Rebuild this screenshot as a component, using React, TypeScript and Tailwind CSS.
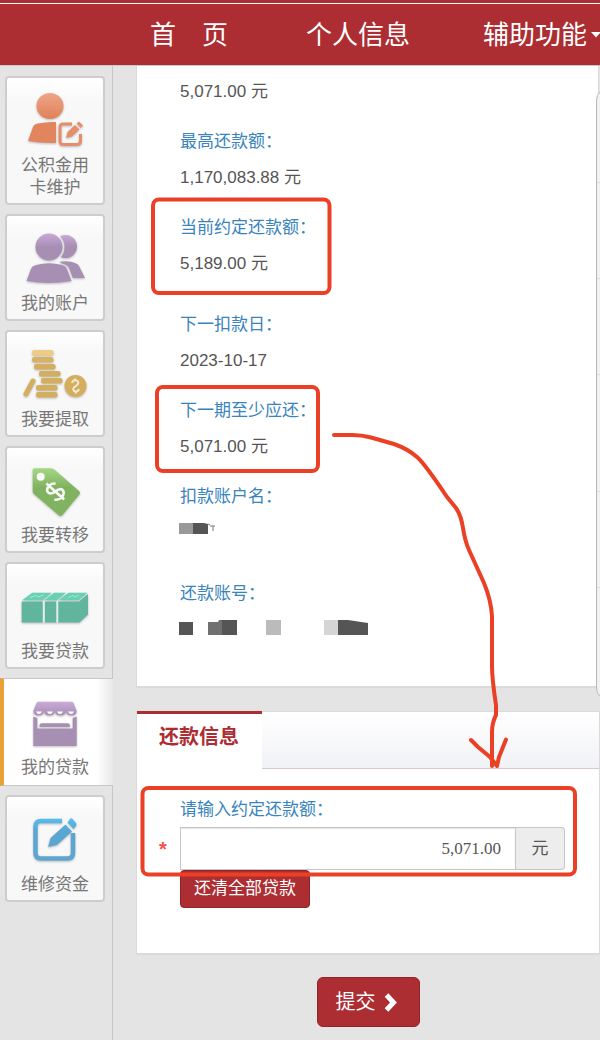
import React, { useState } from "react"
import clsx from "clsx"

const UserEditIcon = () => (
  <>
    <defs>
      <linearGradient id="orange" x1="0" y1="0" x2="0" y2="1">
        <stop offset="0" stopColor="#eda587" />
        <stop offset="1" stopColor="#e08159" />
      </linearGradient>
    </defs>
    <ellipse cx="31" cy="20" rx="13.5" ry="13" fill="url(#orange)" />
    <path d="M9 55 L14 41 Q15 38 19 37.5 Q28 35.5 37 36 V57 Q22 57.5 9 55Z" fill="#e2855f" />
    <path
      d="M53 38 H44 Q41 38 41 41 V55 Q41 58.5 44 58.5 H58 Q61.5 58.5 61.5 55 V48"
      fill="none"
      stroke="#e58e6b"
      strokeWidth="3"
    />
    <path d="M47 52 L48.5 46 L56 39 L60.5 43.5 L53 50.5Z M57.5 37.5 L60 35.5 L64 39.5 L62 42Z" fill="#e58e6b" />
  </>
)

const UsersIcon = () => (
  <>
    <defs>
      <linearGradient id="violet" x1="0" y1="0" x2="0" y2="1">
        <stop offset="0" stopColor="#c9a8d8" />
        <stop offset="0.5" stopColor="#a78fb4" />
      </linearGradient>
      <mask id="behind">
        <rect width="72" height="62" fill="#fff" />
        <circle cx="30" cy="23" r="15.5" fill="#000" />
        <path d="M38 36 L43 39.5 Q49 41 50 44 L55 57 H38Z" fill="#000" />
      </mask>
    </defs>
    <g mask="url(#behind)">
      <circle cx="46.5" cy="22.5" r="11.5" fill="url(#violet)" />
      <path d="M38 38 Q50 36 56 39 Q59 40 60 42 L66 54 H40Z" fill="#a78fb4" />
    </g>
    <circle cx="30" cy="23" r="13.5" fill="url(#violet)" />
    <path d="M7.5 57 L12 45 Q13 42 17 41 Q30 37.5 43 41 Q47 42 48 45 L52.5 57 Q30 61 7.5 57Z" fill="#a78fb4" />
  </>
)

const coins = [
  { x: 13, y: 10, fill: "#efcb84" },
  { x: 13, y: 17, fill: "#d6b262" },
  { x: 15, y: 24, fill: "#d2ae5e" },
  { x: 20, y: 31, fill: "#d2ae5e" },
  { x: 22, y: 38, fill: "#d2ae5e" },
  { x: 17, y: 45, fill: "#d2ae5e" },
  { x: 17, y: 52, fill: "#d2ae5e" },
]

const CoinsIcon = () => (
  <>
    {coins.map(coin => (
      <rect key={coin.y} x={coin.x} y={coin.y} width="21.5" height="5.4" rx="2.2" fill={coin.fill} />
    ))}
    <path d="M14 41 L7 54" stroke="#d2ae5e" strokeWidth="5" strokeLinecap="round" />
    <circle cx="56.5" cy="46" r="11" fill="#d2ae5e" />
    <path
      d="M53 43 Q54 39.5 57.5 40.5 Q61 42 58 45 L55 47.5 Q53 50 56 51.5 Q59 52 60 49 M56 38.5 V40.5 M57 51.5 V53.5"
      fill="none"
      stroke="#f3e9d2"
      strokeWidth="2"
    />
  </>
)

const TagIcon = () => (
  <>
    <defs>
      <linearGradient id="green" x1="0" y1="0" x2="0" y2="1">
        <stop offset="0" stopColor="#a5d886" />
        <stop offset="0.4" stopColor="#80b25f" />
      </linearGradient>
    </defs>
    <path
      d="M15.5 12.3 H32 Q34 12.3 36 14 L60 35 Q62 37 60 39 L43.5 59 Q41.7 61 39.5 59 L15 38 Q13.7 37 13.7 35 V14 Q13.7 12.3 15.5 12.3Z"
      fill="url(#green)"
    />
    <circle cx="21.7" cy="20.7" r="4" fill="#fafafa" />
    <g transform="translate(36.3 35.5) rotate(-48)">
      <path
        d="M6 -5 Q4 -8.5 0 -8.5 Q-6 -8 -5.5 -4 Q-5 -1 0 0 Q6 1 6 4.5 Q5.5 8.5 0 8.5 Q-5 8.5 -6.5 4.5 M0 -12 V12"
        fill="none"
        stroke="#f8f8f8"
        strokeWidth="2.6"
      />
    </g>
  </>
)

const CashIcon = () => (
  <>
    <path
      d="M3 28.2 L13.3 20.7 H32.7 L23.7 28.2Z M25.5 28.2 L35 20.7 H47 L37.7 28.2Z M39.5 28.2 L49.5 20.7 H68.5 L59.7 28.2Z"
      fill="#67d2b2"
    />
    <path
      d="M2.7 29.5 H23.7 V50.5 H2.7Z M26 29.5 H37.3 V50.5 H26Z M39.2 29.5 H60 L69 22 V42.5 L60.5 50.5 H39.2Z"
      fill="#60b59c"
    />
    <path d="M11 25.5 L17 23.5 L19 25 L25 23 M49 25.5 L54 23.5 L56 25 L60 23" fill="none" stroke="#a9e3d2" />
    <path d="M38.3 29 V50.5 M24.8 29 V50.5" stroke="#dcefe9" strokeWidth="1.8" />
  </>
)

const StallIcon = () => (
  <>
    <defs>
      <linearGradient id="roof" x1="0" y1="0" x2="0" y2="1">
        <stop offset="0" stopColor="#caa9d8" />
        <stop offset="1" stopColor="#a78fb4" />
      </linearGradient>
    </defs>
    <path
      d="M20 13.7 H52 Q54 13.7 54.5 15 L57.7 23 Q57.5 27.5 52.5 27.5 Q48 27.5 47 24 Q46 27.5 41.5 27.5 Q37 27.5 36 24 Q35 27.5 30.5 27.5 Q26 27.5 25 24 Q24 27.5 19.5 27.5 Q14.5 27.5 14.3 23 L17.5 15 Q18 13.7 20 13.7Z"
      fill="url(#roof)"
    />
    <path
      d="M17 23.5 H23 Q22 26 20 26 Q18 26 17 23.5Z M28 23.5 H34 Q33 26 31 26 Q29 26 28 23.5Z M38 23.5 H44 Q43 26 41 26 Q39 26 38 23.5Z M49 23.5 H55 Q54 26 52 26 Q50 26 49 23.5Z"
      fill="#fff"
    />
    <path d="M14.3 28.5 L18.3 30 V40.5 H53.7 V30 L57.7 28.5 V58 H14.3Z" fill="#a78fb4" />
    <path d="M20.5 39 V37.5 Q20.5 35.3 23 35.3 H48.5 Q51 35.3 51 37.5 V39Z" fill="#a78fb4" />
  </>
)

const ComposeIcon = () => (
  <>
    <defs>
      <linearGradient id="blue" gradientUnits="userSpaceOnUse" x1="0" y1="12" x2="0" y2="57">
        <stop offset="0" stopColor="#54c1f2" />
        <stop offset="0.3" stopColor="#5aa6d2" />
        <stop offset="1" stopColor="#5ea5cf" />
      </linearGradient>
    </defs>
    <path
      d="M43 16 H22 Q16.500 16 16.500 21.500 V48 Q16.500 53.500 22 53.500 H48.500 Q54 53.500 54 48 V28"
      fill="none"
      stroke="url(#blue)"
      strokeWidth="4.5"
    />
    <path
      d="M29 42 L31.5 33 L46.5 19.5 L53 26.5 L38 40Z M48.5 17.5 L51 14 Q52 12.5 53.5 14 L57 18 Q58 19.5 57 21 L54.5 24Z"
      fill="url(#blue)"
    />
  </>
)

const menu = [
  { label: "公积金用卡维护", Icon: UserEditIcon },
  { label: "我的账户", Icon: UsersIcon },
  { label: "我要提取", Icon: CoinsIcon },
  { label: "我要转移", Icon: TagIcon },
  { label: "我要贷款", Icon: CashIcon },
  { label: "我的贷款", Icon: StallIcon, active: true },
  { label: "维修资金", Icon: ComposeIcon },
]

const NameMask = () => (
  <svg width="40" height="36" className="-ml-0.5" aria-hidden="true">
    <rect x="1" y="8" width="14" height="11" fill="#999" />
    <path d="M15 8 H26 L30 9 V19 H15Z" fill="#555" />
    <path d="M30 9 L32 10 M32 11 H37 M35 11 V16" stroke="#777" fill="none" />
  </svg>
)

const AccountMask = () => (
  <svg width="200" height="36" className="-ml-0.5" aria-hidden="true">
    <rect x="1" y="10" width="14" height="13" fill="#555" />
    <path d="M30 10 H40 L41 8 H45 V23 H30Z" fill="#707070" />
    <rect x="44" y="8" width="15" height="15" fill="#555" />
    <rect x="88" y="8" width="15" height="15" fill="#bbb" />
    <rect x="146" y="8" width="15" height="15" fill="#d5d5d5" />
    <path d="M160 8 H170 L190 11 V23 H160Z" fill="#555" />
  </svg>
)

const details = [
  { label: "最高还款额：", value: "1,170,083.88 元" },
  { label: "当前约定还款额：", value: "5,189.00 元", wide: true },
  { label: "下一扣款日：", value: "2023-10-17" },
  { label: "下一期至少应还：", value: "5,071.00 元" },
  { label: "扣款账户名：", value: <NameMask />, wide: true },
  { label: "还款账号：", value: <AccountMask /> },
]

const Sidebar: React.FC = () => (
  <aside className="w-[113px] shrink-0 border-r border-[#c6c6c6] pt-[10px]">
    <nav className="flex flex-col gap-[9px]">
      {menu.map(({ label, Icon, active }) => (
        <a
          key={label}
          href="#"
          className={clsx(
            "flex flex-col items-center",
            active
              ? "-mr-px h-[108px] border-y border-l-4 border-y-[#c8c8c8] border-l-[#e9a137] bg-linear-to-r from-white from-85% to-[#e8e8e8] pt-[9px] pr-[7px]"
              : "mr-[7px] ml-[5px] rounded border-2 border-[#cdcdcd] bg-linear-to-b from-white via-[#f8f8f8] via-20% to-[#f8f8f8] pt-2 pb-1"
          )}
        >
          <svg width="72" height="62" className="drop-shadow-[0_1px_1px_rgba(0,0,0,0.25)]" aria-hidden="true">
            <Icon />
          </svg>
          <span className="mt-[7px] w-[70px] text-center text-[17px] leading-[22px] text-[#777]">
            {label}
          </span>
        </a>
      ))}
    </nav>
  </aside>
)

// hand-drawn marks that lie over the form
const Marks = () => (
  <svg
    width="600"
    height="1040"
    className="pointer-events-none absolute top-0 left-0"
    fill="none"
    stroke="#eb4025"
    strokeWidth="4"
    strokeLinecap="round"
    strokeLinejoin="round"
    aria-hidden="true"
  >
    <rect x="153" y="199.5" width="176.5" height="93.5" rx="6" />
    <rect x="157" y="387" width="161" height="84" rx="6" />
    <rect x="142.5" y="788" width="432.5" height="86.5" rx="6" />
    <path d="M334 435 H352 Q362 435 371 437.5 L394 444 Q408 449 417 457 Q425 464 447 497 L456 508 Q461 515 463 528 Q465 541 469 550 L484 583 Q491 600 492 616 V666 Q492 679 496 705 V715 Q492 723 492 732 V766" />
    <path d="M471 740 L478 747 L490 757 L497 766 L499 757 L506 739.5" />
  </svg>
)

const App: React.FC = () => {
  const [amount, setAmount] = useState("5,071.00")
  return (
    <div
      lang="zh-CN"
      className="relative flex min-h-screen flex-col overflow-hidden bg-[#e4e4e4] font-['Liberation_Sans','Noto_Sans_CJK_SC',sans-serif] text-[17px] text-[#555]"
    >
      <header className="border-b border-[#c9c9c9] bg-[#ac2d32] pt-[3px]">
        <nav className="flex h-[62px] items-center border-t border-white pt-px pl-[150px] text-[26px] whitespace-pre text-white">
          <a href="#" className="mr-[78px]">首　页</a>
          <a href="#" className="mr-[73px]">个人信息</a>
          <a href="#" className="flex items-center gap-1">
            辅助功能
            <svg width="10" height="6" className="shrink-0" aria-hidden="true">
              <path d="M0 0 H10 L5 5.5Z" fill="#fff" />
            </svg>
          </a>
        </nav>
      </header>

      <div className="flex flex-1">
        <Sidebar />
        <main className="ml-[23px] min-w-0 flex-1">
          <section className="mr-px border-x border-b-2 border-[#dadada] bg-white pt-2 pb-[38px] pl-[43px]">
            <p className="mb-[14px] leading-[36px]">5,071.00 元</p>
            <dl>
              {details.map(item => (
                <div key={item.label} className={clsx("last:mb-0", item.wide ? "mb-[25px]" : "mb-[14px]")}>
                  <dt className="leading-[36px] text-[#3a84bc]">{item.label}</dt>
                  <dd className="h-[36px] leading-[36px]">{item.value}</dd>
                </div>
              ))}
            </dl>
          </section>

          <section className="mt-[23px] border border-b-2 border-[#dadada] bg-white">
            <div className="flex h-[57px]">
              <h2 className="-mt-px w-[125px] border-t-3 border-[#ac2d32] pl-[22px] text-xl leading-[46px] font-bold text-[#ac2d32]">
                还款信息
              </h2>
              <div className="flex-1 border-b border-[#d8c8cc] bg-linear-to-b from-white to-[#f1f2f6]" />
            </div>
            <form className="pt-[23px] pr-[34px] pb-[45px] pl-[43px]" onSubmit={e => e.preventDefault()}>
              <label htmlFor="amount" className="block h-[35px] leading-[36px] text-[#3a84bc]">
                请输入约定还款额：
              </label>
              <div className="relative flex h-[43px]">
                <span className="absolute top-2 -left-[21px] text-xl font-bold text-[#f0544b]">*</span>
                <input
                  id="amount"
                  value={amount}
                  onChange={e => setAmount(e.target.value)}
                  className="min-w-0 flex-1 border border-[#c6c6c6] bg-white pr-[14px] text-right font-['Liberation_Serif',serif] text-[17px] shadow-[inset_0_1px_1px_rgba(0,0,0,0.1)]"
                />
                <span className="flex w-[49px] items-center justify-center rounded-r border border-l-0 border-[#c6c6c6] bg-[#ededed]">
                  元
                </span>
              </div>
              <button
                type="button"
                className="block h-[38px] rounded border border-[#8f2429] bg-[#ac2d32] px-[13px] text-white"
              >
                还清全部贷款
              </button>
            </form>
          </section>

          <div className="mt-[22px] flex justify-center">
            <button
              type="submit"
              className="flex h-[50px] items-center gap-2 rounded-md border border-[#8f2429] bg-[#ac2d32] pr-[22px] pl-[18px] text-xl text-white"
            >
              提交
              <svg width="13" height="20" aria-hidden="true">
                <path d="M2.500 3 L9.500 10.500 L2.500 18" fill="none" stroke="#fff" strokeWidth="5" />
              </svg>
            </button>
          </div>
        </main>
      </div>

      {/* edge of the floating toolbar */}
      <div className="absolute top-[88px] -right-[20px] h-[612px] w-[24px] rounded-l-[12px] border border-[#b8b8b8] bg-[#f1f1f1]">
        <div className="mt-[93px] h-[97px] border-y border-[#dcdcdc]" />
        <div className="h-[96px] border-b border-[#dcdcdc]" />
        <div className="mt-[116px] h-[97px] border-y border-[#dcdcdc]" />
      </div>
      <Marks />
    </div>
  )
}

export default App
